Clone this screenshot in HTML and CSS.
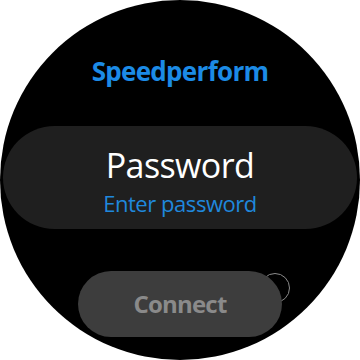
FILE: index.html
```html
<!DOCTYPE html>
<html>
<head>
<meta charset="utf-8">
<link rel="stylesheet" href="styles.css">
</head>
<body>
<div class="screen">
  <div class="title">Speedperform</div>
  <div class="card">
    <div class="card-label">Password</div>
    <div class="card-sub">Enter password</div>
  </div>
  <div class="actions">
    <div class="btn-wrap">
      <span class="ring"></span>
      <div class="btn">Connect</div>
    </div>
  </div>
</div>
</body>
</html>
```

FILE: styles.css
```css
html, body {
  margin: 0;
  padding: 0;
  background: #ffffff;
}
.screen {
  width: 360px;
  height: 360px;
  background: #000000;
  border-radius: 50%;
  overflow: hidden;
  display: flex;
  flex-direction: column;
  align-items: center;
  font-family: "Open Sans", "Noto Sans", sans-serif;
}
.title {
  margin-top: 53px;
  height: 36px;
  line-height: 36px;
  font-size: 26px;
  font-weight: 700;
  color: #1c8be6;
  letter-spacing: -0.7px;
}
.card {
  margin-top: 37px;
  width: 354px;
  height: 103px;
  border-radius: 52px;
  background: #1f1f1f;
  display: flex;
  flex-direction: column;
  align-items: center;
  box-sizing: border-box;
  padding-top: 17px;
}
.card-label {
  height: 45px;
  line-height: 44px;
  font-size: 34px;
  color: #ffffff;
  letter-spacing: -0.6px;
}
.card-sub {
  height: 30px;
  line-height: 30px;
  font-size: 22px;
  color: #1f88dc;
  letter-spacing: -0.45px;
}
.actions {
  margin-top: 42px;
  display: flex;
  justify-content: center;
  width: 100%;
}
.btn-wrap {
  position: relative;
  width: 204px;
  height: 66px;
}
.ring {
  position: absolute;
  left: 182px;
  top: 2px;
  width: 28px;
  height: 28px;
  border: 1px solid #8a8a8a;
  border-radius: 50%;
}
.btn {
  position: relative;
  width: 204px;
  height: 66px;
  border-radius: 33px;
  background: #3d3d3d;
  color: #8a8a8a;
  font-size: 24px;
  font-weight: 700;
  line-height: 66px;
  text-align: center;
  letter-spacing: -0.8px;
}
```
